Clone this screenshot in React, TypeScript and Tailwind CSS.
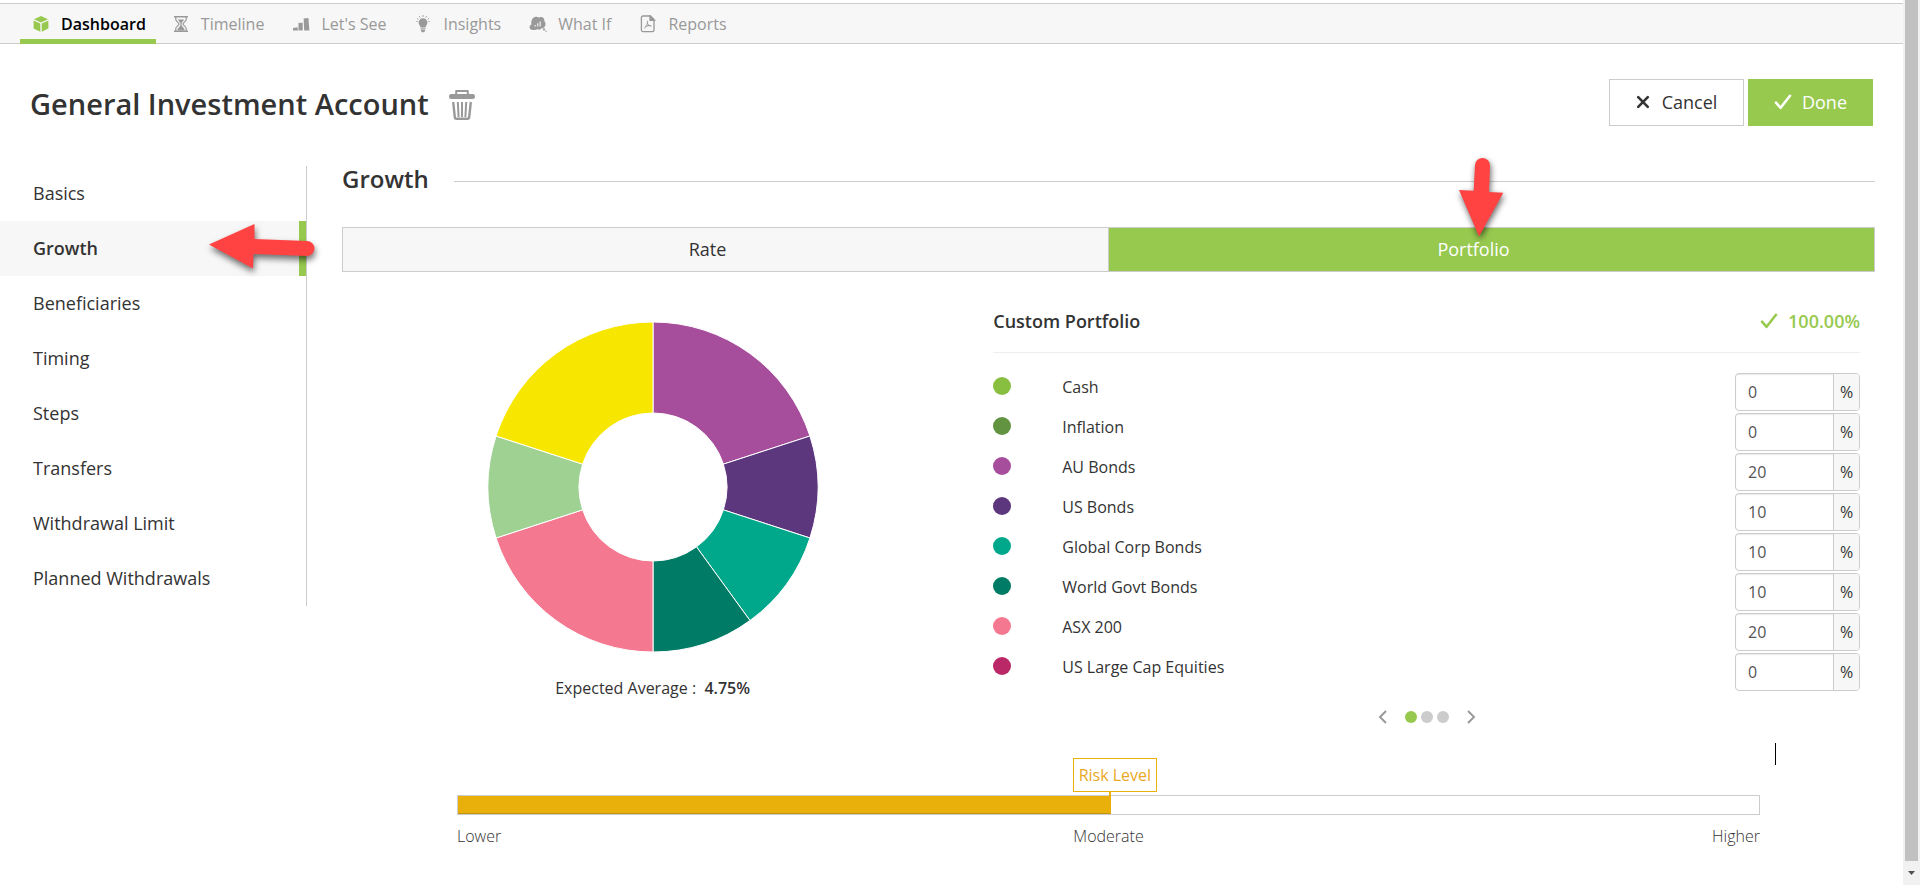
import React, { useState } from 'react';

interface Asset {
    name: string;
    color: string;
    value: number;
}

const initialAssets: Asset[] = [
    { name: 'Cash', color: '#88bf40', value: 0 },
    { name: 'Inflation', color: '#619340', value: 0 },
    { name: 'AU Bonds', color: '#a64d9b', value: 20 },
    { name: 'US Bonds', color: '#5d377e', value: 10 },
    { name: 'Global Corp Bonds', color: '#00a88b', value: 10 },
    { name: 'World Govt Bonds', color: '#007b65', value: 10 },
    { name: 'ASX 200', color: '#f4788f', value: 20 },
    { name: 'US Large Cap Equities', color: '#ba2868', value: 0 },
];

const otherAssets: Asset[] = [
    { name: 'Global Equities', color: '#9fd193', value: 10 },
    { name: 'Property', color: '#f7e600', value: 20 },
];

const navItems = ['Basics', 'Growth', 'Beneficiaries', 'Timing', 'Steps', 'Transfers', 'Withdrawal Limit', 'Planned Withdrawals'];

const CubeIcon = () => (
    <svg width="18" height="18" viewBox="0 0 18 18" fill="currentColor">
        <path d="M9 1l7 3.2-7 3.4-7-3.4z" />
        <path d="M1.6 5.4l6.7 3.2v8.2l-6.7-3.3z" />
        <path d="M16.4 5.4L9.7 8.6v8.2l6.7-3.3z" />
    </svg>
);

const HourglassIcon = () => (
    <svg width="18" height="18" viewBox="0 0 18 18" fill="none" stroke="currentColor">
        <path d="M2 1.8h14M2 16.2h14" strokeWidth="1.6" />
        <path d="M3.8 2v2.4c0 2 3.2 3.2 3.2 4.6s-3.2 2.6-3.2 4.6V16M14.2 2v2.4c0 2-3.2 3.2-3.2 4.6s3.2 2.6 3.2 4.6V16" strokeWidth="1.2" />
        <path d="M5.8 4.6h6.4L9.6 8v2.4l2.8 3.6v1.4H5.6V14l2.8-3.6V8z" fill="currentColor" stroke="none" />
    </svg>
);

const BarsIcon = () => (
    <svg width="18" height="18" viewBox="0 0 18 18" fill="currentColor">
        <path d="M1 12.9l4.5-.6.5 3.1H1z" />
        <path d="M6.5 7.8h4.2v7.6H6.5z" />
        <path d="M11.6 3.5l4.8-.6 1 12.5h-5.2z" />
    </svg>
);

const BulbIcon = () => (
    <svg width="18" height="18" viewBox="0 0 18 18" fill="currentColor">
        <path d="M9 3.2a4.4 4.4 0 0 0-4.4 4.4c0 2 1.5 2.9 1.9 5h5c.4-2.1 1.9-3 1.9-5A4.4 4.4 0 0 0 9 3.2z" />
        <path d="M6.6 13.3h4.8v1.3H6.6zM7 15.1h4v1l-1 1.1H8l-1-1.1z" />
        <path d="M9 0v2M5.3 1l.9 1.500M12.7 1l-.9 1.500M3 3.400l1.400.9M15 3.400l-1.400.9M2.300 6.500h1.300M15.700 6.500h-1.300" stroke="currentColor" strokeWidth=".9" />
    </svg>
);

const ThinkIcon = () => (
    <svg width="18" height="18" viewBox="0 0 18 18">
        <path d="M4 15C1.500 15 .4 13.500.6 11.700.7 10.500 1.500 9.700 2.600 9.400 1.800 6.500 2.900 3 5.800 2c1.700-.6 3-.2 4 .5 1.700-1 3.700-.7 4.800.8.7.9.9 1.800.7 2.700 1.500 1.400 1.700 4 .4 5.700-.9 1.200-2 1.700-3.400 1.700-1 1.200-2.700 1.400-3.900.9C7.300 15.100 5.700 15.200 4 15z" fill="currentColor" />
        <path d="M5.500 10h1.400v1.600H5.500zM8 8.300h1.400v3.300H8zM10.500 6.500h1.400v5.100h-1.400z" fill="#f7f7f7" opacity=".8" />
        <circle cx="15" cy="14.400" r="1.100" fill="currentColor" />
        <circle cx="17" cy="16.300" r=".7" fill="currentColor" />
    </svg>
);

const PdfIcon = () => (
    <svg width="18" height="18" viewBox="0 0 18 18" fill="none" stroke="currentColor" strokeWidth="1.300">
        <path d="M4 1h7.500L15 4.500V15a1.600 1.600 0 0 1-1.600 1.600H4A1.600 1.600 0 0 1 2.400 15V2.600A1.600 1.600 0 0 1 4 1z" />
        <path d="M11 1l4.400 4.400H11z" fill="currentColor" />
        <path d="M8.200 5.700c.8 1 .3 3-.6 4.800-.6 1.200-1.500 2.500-2.400 2.600M8.200 7.500c.4 1.700 1.700 3.400 4.400 3.600M6.300 11.500c1.700-.7 3.400-1 5-.8" strokeWidth="1" />
    </svg>
);

const CheckIcon = () => (
    <svg width="18" height="16" viewBox="0 0 18 16" fill="none" stroke="currentColor" strokeWidth="2.600" strokeLinecap="round" strokeLinejoin="round">
        <path d="M2 8.600l4.600 5.200L16 1.800" />
    </svg>
);

const CrossIcon = () => (
    <svg width="14" height="14" viewBox="0 0 14 14" fill="none" stroke="currentColor" strokeWidth="2.600" strokeLinecap="round">
        <path d="M2.200 2.200l9.600 9.600M11.800 2.200l-9.600 9.600" />
    </svg>
);

const TrashIcon = () => (
    <svg width="26" height="30" viewBox="0 0 26 30" fill="none" stroke="currentColor">
        <path d="M7.200 5V1h11.600v4" strokeWidth="2" strokeLinejoin="round" />
        <rect x="0" y="4" width="26" height="5" rx="2.200" fill="currentColor" stroke="none" />
        <path d="M4.200 12l1.600 15.200c.1 1 .7 1.600 1.600 1.600h11.200c.9 0 1.500-.6 1.600-1.600L21.800 12" strokeWidth="2.400" />
        <path d="M8.800 12l.8 15M13 12v15M17.200 12l-.8 15" strokeWidth="2" />
    </svg>
);

const topTabs = [
    { label: 'Dashboard', icon: <CubeIcon /> },
    { label: 'Timeline', icon: <HourglassIcon /> },
    { label: "Let's See", icon: <BarsIcon /> },
    { label: 'Insights', icon: <BulbIcon /> },
    { label: 'What If', icon: <ThinkIcon /> },
    { label: 'Reports', icon: <PdfIcon /> },
];

const DonutChart: React.FC<{ data: Asset[] }> = ({ data }) => {
    const total = data.reduce((sum, d) => sum + d.value, 0) || 1;
    const outer = 165;
    const inner = 74;
    const point = (r: number, share: number) => {
        const angle = share * 2 * Math.PI;
        return `${(Math.sin(angle) * r).toFixed(2)} ${(-Math.cos(angle) * r).toFixed(2)}`;
    };
    let start = 0;

    return (
        <svg width="332" height="332" viewBox="-166 -166 332 332" role="img" aria-label="Portfolio allocation">
            {data.filter(d => d.value > 0).map(d => {
                const from = start;
                const to = start + d.value / total;
                start = to;
                const large = to - from > 0.5 ? 1 : 0;
                return (
                    <path
                        key={d.name}
                        d={`M${point(outer, from)}A${outer} ${outer} 0 ${large} 1 ${point(outer, to)}L${point(inner, to)}A${inner} ${inner} 0 ${large} 0 ${point(inner, from)}Z`}
                        fill={d.color}
                        stroke="#fff"
                        strokeWidth="1"
                    />
                );
            })}
        </svg>
    );
};

const LeftPointer = () => (
    <svg className="absolute left-[204px] top-0 z-10 pointer-events-none drop-shadow-[1px_4px_3px_rgba(0,0,0,0.55)]" width="114" height="55" viewBox="204 221 114 55">
        <path d="M209 244.500L254.500 224v15l52.500 2a7.500 7.500 0 0 1 0 15l-53.500-2-.5 14.500z" fill="#ff4343" />
    </svg>
);

const DownPointer = () => (
    <svg className="absolute left-1/2 -top-[74px] -ml-[40px] z-10 pointer-events-none drop-shadow-[1px_3px_3px_rgba(0,0,0,0.6)]" width="60" height="88" viewBox="1452 154 60 88">
        <path d="M1479 236.500L1459 190l14.700.7L1475 165a7.500 7.500 0 0 1 15 1l-1 26 14.300.8z" fill="#ff4343" />
    </svg>
);

function App() {
    const [assets, setAssets] = useState(initialAssets);
    const [mode, setMode] = useState<'rate' | 'portfolio'>('portfolio');
    const [section, setSection] = useState('Growth');
    const [page, setPage] = useState(0);

    const holdings = [...assets, ...otherAssets];
    const total = holdings.reduce((sum, a) => sum + a.value, 0);

    const updateValue = (name: string, value: string) => {
        setAssets(assets.map(a => (a.name === name ? { ...a, value: Number(value) || 0 } : a)));
    };

    return (
        <div className="flex min-h-screen bg-white font-['Open_Sans',sans-serif] text-base text-[#333]">
            <div className="min-w-0 flex-1 pt-[3px]">
                <nav className="flex h-[41px] gap-1 border-y border-[#ccc] bg-[#f7f7f7] pl-5">
                    {topTabs.map((tab, i) => (
                        <a
                            key={tab.label}
                            href="#"
                            className={`-mb-px flex items-center gap-[11px] border-b-[5px] pl-3 pt-[4px] leading-6 ${i === 0 ? 'border-[#97c94f] pr-[10px] font-semibold text-black' : 'border-transparent pr-3 text-[#999]'}`}
                        >
                            <span className={i === 0 ? 'text-[#97c94f]' : ''}>{tab.icon}</span>
                            {tab.label}
                        </a>
                    ))}
                </nav>

                <header className="flex items-start justify-between pl-[30px] pr-[30px] pt-[35px]">
                    <div className="flex items-center gap-5">
                        <h1 className="text-[29px] font-semibold leading-[50px]">General Investment Account</h1>
                        <button type="button" aria-label="Delete account" className="pt-px text-[#999]"><TrashIcon /></button>
                    </div>
                    <div className="flex gap-1 text-lg">
                        <button type="button" className="flex h-[47px] w-[135px] items-center justify-center gap-3 border border-[#ccc] pb-[2px]">
                            <CrossIcon /> Cancel
                        </button>
                        <button type="button" className="flex h-[47px] w-[125px] items-center justify-center gap-[10px] bg-[#97c94f] pb-[2px] text-white">
                            <CheckIcon /> Done
                        </button>
                    </div>
                </header>

                <div className="flex items-start pt-[37px]">
                    <aside className="w-[307px] shrink-0 border-r border-[#ccc]">
                        {navItems.map(item => (
                            <div key={item} className="relative">
                                <a
                                    href="#"
                                    onClick={() => setSection(item)}
                                    className={`block border-r-[7px] pl-[33px] text-lg leading-[55px] ${item === section ? 'border-[#97c94f] bg-[#f7f7f7] font-semibold' : 'border-transparent'}`}
                                >
                                    {item}
                                </a>
                                {item === 'Growth' && <LeftPointer />}
                            </div>
                        ))}
                    </aside>

                    <main className="min-w-0 flex-1 pl-[35px] pr-[28px]">
                        <div className="flex h-[30px] items-center gap-[25px]">
                            <h2 className="pb-1 text-2xl font-semibold leading-6">Growth</h2>
                            <div className="h-px flex-1 bg-[#ccc]" />
                        </div>

                        <div className="mt-[31px] flex h-[45px] border border-[#ccc] text-lg">
                            <button type="button" onClick={() => setMode('rate')} className={`flex-1 pb-[2px] pr-9 ${mode === 'rate' ? 'bg-[#97c94f] text-white' : 'bg-[#f7f7f7]'}`}>
                                Rate
                            </button>
                            <button type="button" onClick={() => setMode('portfolio')} className={`relative flex-1 border-l border-[#ccc] pb-[2px] pr-9 ${mode === 'portfolio' ? 'bg-[#97c94f] text-white' : 'bg-[#f7f7f7]'}`}>
                                Portfolio
                                <DownPointer />
                            </button>
                        </div>

                        <div className="-mx-[15px] flex pt-8">
                            <div className="flex w-5/12 flex-col items-center pt-[17px]">
                                <DonutChart data={holdings} />
                                <p className="mt-[23px] leading-6">Expected Average : &nbsp;<span className="font-semibold">4.75%</span></p>
                            </div>

                            <div className="w-7/12 pl-[15px] pr-[30px]">
                                <div className="flex h-[49px] items-center justify-between border-b border-[#eee] pb-[14px] text-lg font-semibold">
                                    <h3>Custom Portfolio</h3>
                                    <span className="flex items-center gap-[10px] text-[#97c94f]"><CheckIcon /> {total.toFixed(2)}%</span>
                                </div>
                                <ul className="pt-5">
                                    {assets.map((asset, i) => (
                                        <li key={asset.name} className="flex h-10 items-start">
                                            <span className="mt-1 h-[18px] w-[18px] rounded-full" style={{ backgroundColor: asset.color }} />
                                            <label htmlFor={`asset-${i}`} className="ml-[51px] flex-1 leading-7">{asset.name}</label>
                                            <div className="flex h-[38px] w-[125px] overflow-hidden rounded border border-[#ccc]">
                                                <input
                                                    id={`asset-${i}`}
                                                    type="text"
                                                    value={asset.value}
                                                    onChange={e => updateValue(asset.name, e.target.value)}
                                                    className="w-0 flex-1 pl-3 text-[#555] shadow-[inset_0_1px_1px_rgba(0,0,0,0.08)] outline-none"
                                                />
                                                <span className="w-[26px] border-l border-[#ccc] bg-[#f7f7f7] text-center leading-9">%</span>
                                            </div>
                                        </li>
                                    ))}
                                </ul>
                                <div className="mt-3 flex h-6 items-center justify-center text-[#999]">
                                    <button type="button" aria-label="Previous page" onClick={() => setPage(Math.max(0, page - 1))}>
                                        <svg width="10" height="14" viewBox="0 0 10 14" fill="none" stroke="currentColor" strokeWidth="2"><path d="M8 1L2 7l6 6" /></svg>
                                    </button>
                                    <div className="mx-[17px] flex gap-1">
                                        {[0, 1, 2].map(n => (
                                            <button key={n} type="button" aria-label={`Page ${n + 1}`} onClick={() => setPage(n)} className={`h-3 w-3 rounded-full ${n === page ? 'bg-[#97c94f]' : 'bg-[#ccc]'}`} />
                                        ))}
                                    </div>
                                    <button type="button" aria-label="Next page" onClick={() => setPage(Math.min(2, page + 1))}>
                                        <svg width="10" height="14" viewBox="0 0 10 14" fill="none" stroke="currentColor" strokeWidth="2"><path d="M2 1l6 6-6 6" /></svg>
                                    </button>
                                </div>
                            </div>
                        </div>

                        <div className="relative px-[115px] pb-6 pt-[66px]">
                            {/* text caret */}
                            <div className="absolute right-[99px] top-[14px] h-[22px] w-px bg-black" />
                            <div className="relative h-5 border border-[#ccc]">
                                <div className="relative h-full w-[50.2%] border-b border-[#c4930f] bg-[#e9af0b]">
                                    <div className="absolute right-0 -top-1 h-1 w-[2px] bg-[#e9af0b]" />
                                    <div className="absolute -right-[46px] bottom-full mb-1 whitespace-nowrap border border-[#e9af0b] bg-white px-[5px] leading-8 text-[#e9a825]">Risk Level</div>
                                </div>
                            </div>
                            <div className="grid grid-cols-3 pt-[9px] font-light leading-6">
                                <span>Lower</span>
                                <span className="text-center">Moderate</span>
                                <span className="text-right">Higher</span>
                            </div>
                        </div>
                    </main>
                </div>
            </div>

            <div className="flex w-[17px] shrink-0 flex-col items-center bg-[#f1f1f1]">
                <div className="w-[13px] flex-1 bg-[#c1c1c1]" />
                <div className="flex h-6 items-center justify-center text-[#505050]">
                    <svg width="7" height="4" viewBox="0 0 7 4" fill="currentColor"><path d="M0 0h7L3.500 4z" /></svg>
                </div>
            </div>
        </div>
    );
}

export default App;
